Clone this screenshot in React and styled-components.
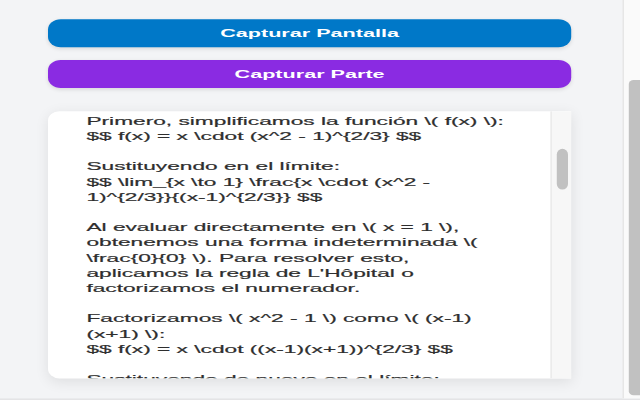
import styled, { createGlobalStyle } from 'styled-components';

// the capture is a 400x500 popup squeezed into 640x400, so the stage is scaled to match
const GlobalStyle = createGlobalStyle`
  html, body {
    margin: 0;
    padding: 0;
    overflow: hidden;
    background: #f3f4f6;
  }
  #root {
    height: 400px;
    overflow: hidden;
  }
  * {
    box-sizing: border-box;
  }
`;

const Stage = styled.div`
  width: 400px;
  height: 500px;
  display: flex;
  transform: scale(1.6, 0.8);
  transform-origin: 0 0;
  border-bottom: 2px solid #e4e4e6;
  font-family: "Liberation Sans", Arial, sans-serif;
`;

const Main = styled.main`
  flex: 1;
  display: flex;
  flex-direction: column;
  gap: 16px;
  padding: 24px 32px 0 30px;
`;

const ActionButton = styled.button`
  height: 35px;
  border: none;
  border-radius: 8px / 13px;
  background: ${(p) => p.$color};
  color: #ffffff;
  font-family: inherit;
  font-size: 13.5px;
  font-weight: 700;
  box-shadow: 0 2px 4px rgba(0, 0, 0, 0.12);
  cursor: pointer;
`;

const ResultCard = styled.section`
  margin-top: 13px;
  height: 334px;
  display: flex;
  background: #ffffff;
  border-radius: 7px 0 0 7px / 12px 0 0 12px;
  box-shadow: 0 4px 12px rgba(0, 0, 0, 0.09);
  overflow: hidden;
`;

const ResultText = styled.div`
  flex: 1;
  overflow: hidden;
  padding: 3px 22px 0 24px;
  color: #2e2e2e;
  font-size: 14.2px;
  line-height: 19px;
  white-space: pre-wrap;
  -webkit-text-stroke: 0.25px #2e2e2e;
`;

const Track = styled.div`
  width: 13px;
  flex-shrink: 0;
  background: #f7f7f7;
  border-left: 1px solid #ebebeb;
  padding-left: 3px;
`;

const Thumb = styled.div`
  width: 7px;
  height: 51px;
  margin-top: ${(p) => p.$offset}px;
  background: #c1c1c1;
  border-radius: 4px / 8px;
`;

const PageTrack = styled.div`
  width: 11px;
  flex-shrink: 0;
  background: #fafafa;
  border-left: 1px solid #e6e6e6;
  padding: 100px 0 4px 3px;
`;

const PageThumb = styled.div`
  height: 100%;
  background: #c1c1c1;
  border-radius: 3px 0 0 3px / 5px 0 0 5px;
`;

const result = `Primero, simplificamos la función \\( f(x) \\):
$$ f(x) = x \\cdot (x^2 - 1)^{2/3} $$

Sustituyendo en el límite:
$$ \\lim_{x \\to 1} \\frac{x \\cdot (x^2 - 1)^{2/3}}{(x-1)^{2/3}} $$

Al evaluar directamente en \\( x = 1 \\), obtenemos una forma indeterminada \\( \\frac{0}{0} \\). Para resolver esto, aplicamos la regla de L'Hôpital o factorizamos el numerador.

Factorizamos \\( x^2 - 1 \\) como \\( (x-1)(x+1) \\):
$$ f(x) = x \\cdot ((x-1)(x+1))^{2/3} $$

Sustituyendo de nuevo en el límite:
$$ \\lim_{x \\to 1} \\frac{x \\cdot (x-1)^{2/3}(x+1)^{2/3}}{(x-1)^{2/3}} $$`;

const App = () => {
    return (
        <>
            <GlobalStyle />
            <Stage>
                <Main>
                    <ActionButton $color="#0078c8">Capturar Pantalla</ActionButton>
                    <ActionButton $color="#8a2be2">Capturar Parte</ActionButton>
                    <ResultCard>
                        <ResultText>{result}</ResultText>
                        <Track>
                            <Thumb $offset={47} />
                        </Track>
                    </ResultCard>
                </Main>
                <PageTrack>
                    <PageThumb />
                </PageTrack>
            </Stage>
        </>
    );
};

export default App;
